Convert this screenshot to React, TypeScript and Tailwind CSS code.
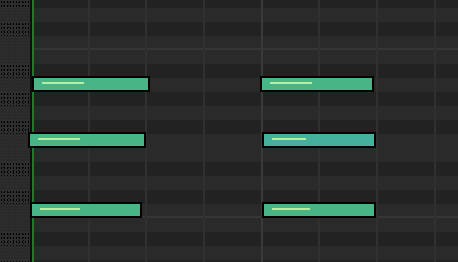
import React from "react";

type Row = { h: "s" | "n"; black: boolean; oct?: boolean };

const rows: Row[] = [
  { h: "s", black: true },
  { h: "n", black: false },
  { h: "n", black: true },
  { h: "n", black: false, oct: true },
  { h: "n", black: false },
  { h: "n", black: true },
  { h: "n", black: false },
  { h: "n", black: true },
  { h: "n", black: false },
  { h: "n", black: true },
  { h: "n", black: false },
  { h: "n", black: false },
  { h: "n", black: true },
  { h: "n", black: false },
  { h: "n", black: true },
  { h: "n", black: false, oct: true },
  { h: "n", black: false },
  { h: "n", black: true },
  { h: "n", black: false },
  { h: "n", black: true },
];

function keyClass(r: Row) {
  const h = r.h === "s" ? "h-[8px]" : "h-[14px]";
  if (r.black)
    return `${h} shrink-0 bg-[#2e2e2e] bg-[radial-gradient(circle,#000_0.8px,transparent_1px),radial-gradient(circle,#0a0a0a_0.7px,transparent_0.9px)] bg-[length:3px_4px,5px_3px] bg-[position:0_0,1px_1px]`;
  return `${h} shrink-0 bg-[#2a2a2a] bg-[radial-gradient(circle,#333333_0.7px,transparent_0.9px)] bg-[length:3px_3px]`;
}

function gridClass(r: Row) {
  const h = r.h === "s" ? "h-[8px]" : "h-[14px]";
  if (r.black) return `${h} shrink-0 bg-[#222222]`;
  if (r.oct)
    return `${h} shrink-0 bg-[#2a2a2a] border-b-2 border-[#363636]`;
  return `${h} shrink-0 bg-[#2a2a2a]`;
}

type Note = {
  x: number;
  y: number;
  w: number;
  hl: number;
  teal?: boolean;
};

const notes: Note[] = [
  { x: 32, y: 76, w: 118, hl: 42 },
  { x: 28, y: 132, w: 118, hl: 42 },
  { x: 30, y: 202, w: 112, hl: 40 },
  { x: 260, y: 76, w: 114, hl: 42 },
  { x: 262, y: 132, w: 114, hl: 34, teal: true },
  { x: 262, y: 202, w: 114, hl: 38 },
];

export default function App() {
  return (
    <div className="relative w-[458px] h-[262px] overflow-hidden bg-[#222222] flex">
      {/* piano keys */}
      <div className="w-[30px] shrink-0 flex flex-col">
        {rows.map((r, i) => (
          <div key={i} className={keyClass(r)} />
        ))}
      </div>
      {/* grid */}
      <div className="relative flex-1 flex flex-col">
        {rows.map((r, i) => (
          <div key={i} className={gridClass(r)} />
        ))}
        {/* vertical beat lines */}
        <div className="absolute inset-0 flex pointer-events-none">
          <div className="w-[57.67px] shrink-0 border-l-2 border-[#0e0e0e]" />
          <div className="w-[57.67px] shrink-0 border-l-2 border-[#303030]" />
          <div className="w-[57.67px] shrink-0 border-l-2 border-[#303030]" />
          <div className="w-[57.67px] shrink-0 border-l-2 border-[#303030]" />
          <div className="w-[57.67px] shrink-0 border-l-2 border-[#3a3a3a]" />
          <div className="w-[57.67px] shrink-0 border-l-2 border-[#303030]" />
          <div className="w-[57.67px] shrink-0 border-l-2 border-[#303030]" />
          <div className="w-[57.67px] shrink-0 border-l-2 border-[#303030]" />
        </div>
        {/* playhead */}
        <div className="absolute top-0 bottom-0 left-[2px] w-[2px] bg-[#1f7a2c]" />
      </div>
      {/* notes */}
      {notes.map((n, i) => (
        <div
          key={i}
          className={`absolute h-[16px] border-2 border-black ${
            n.teal ? "bg-[#46b09f]" : "bg-[#49b586]"
          }`}
          style={{ left: n.x, top: n.y, width: n.w }}
        >
          <div
            className="absolute left-[8px] top-[4px] h-[2px] bg-[#b8eea2]"
            style={{ width: n.hl }}
          />
        </div>
      ))}
    </div>
  );
}
